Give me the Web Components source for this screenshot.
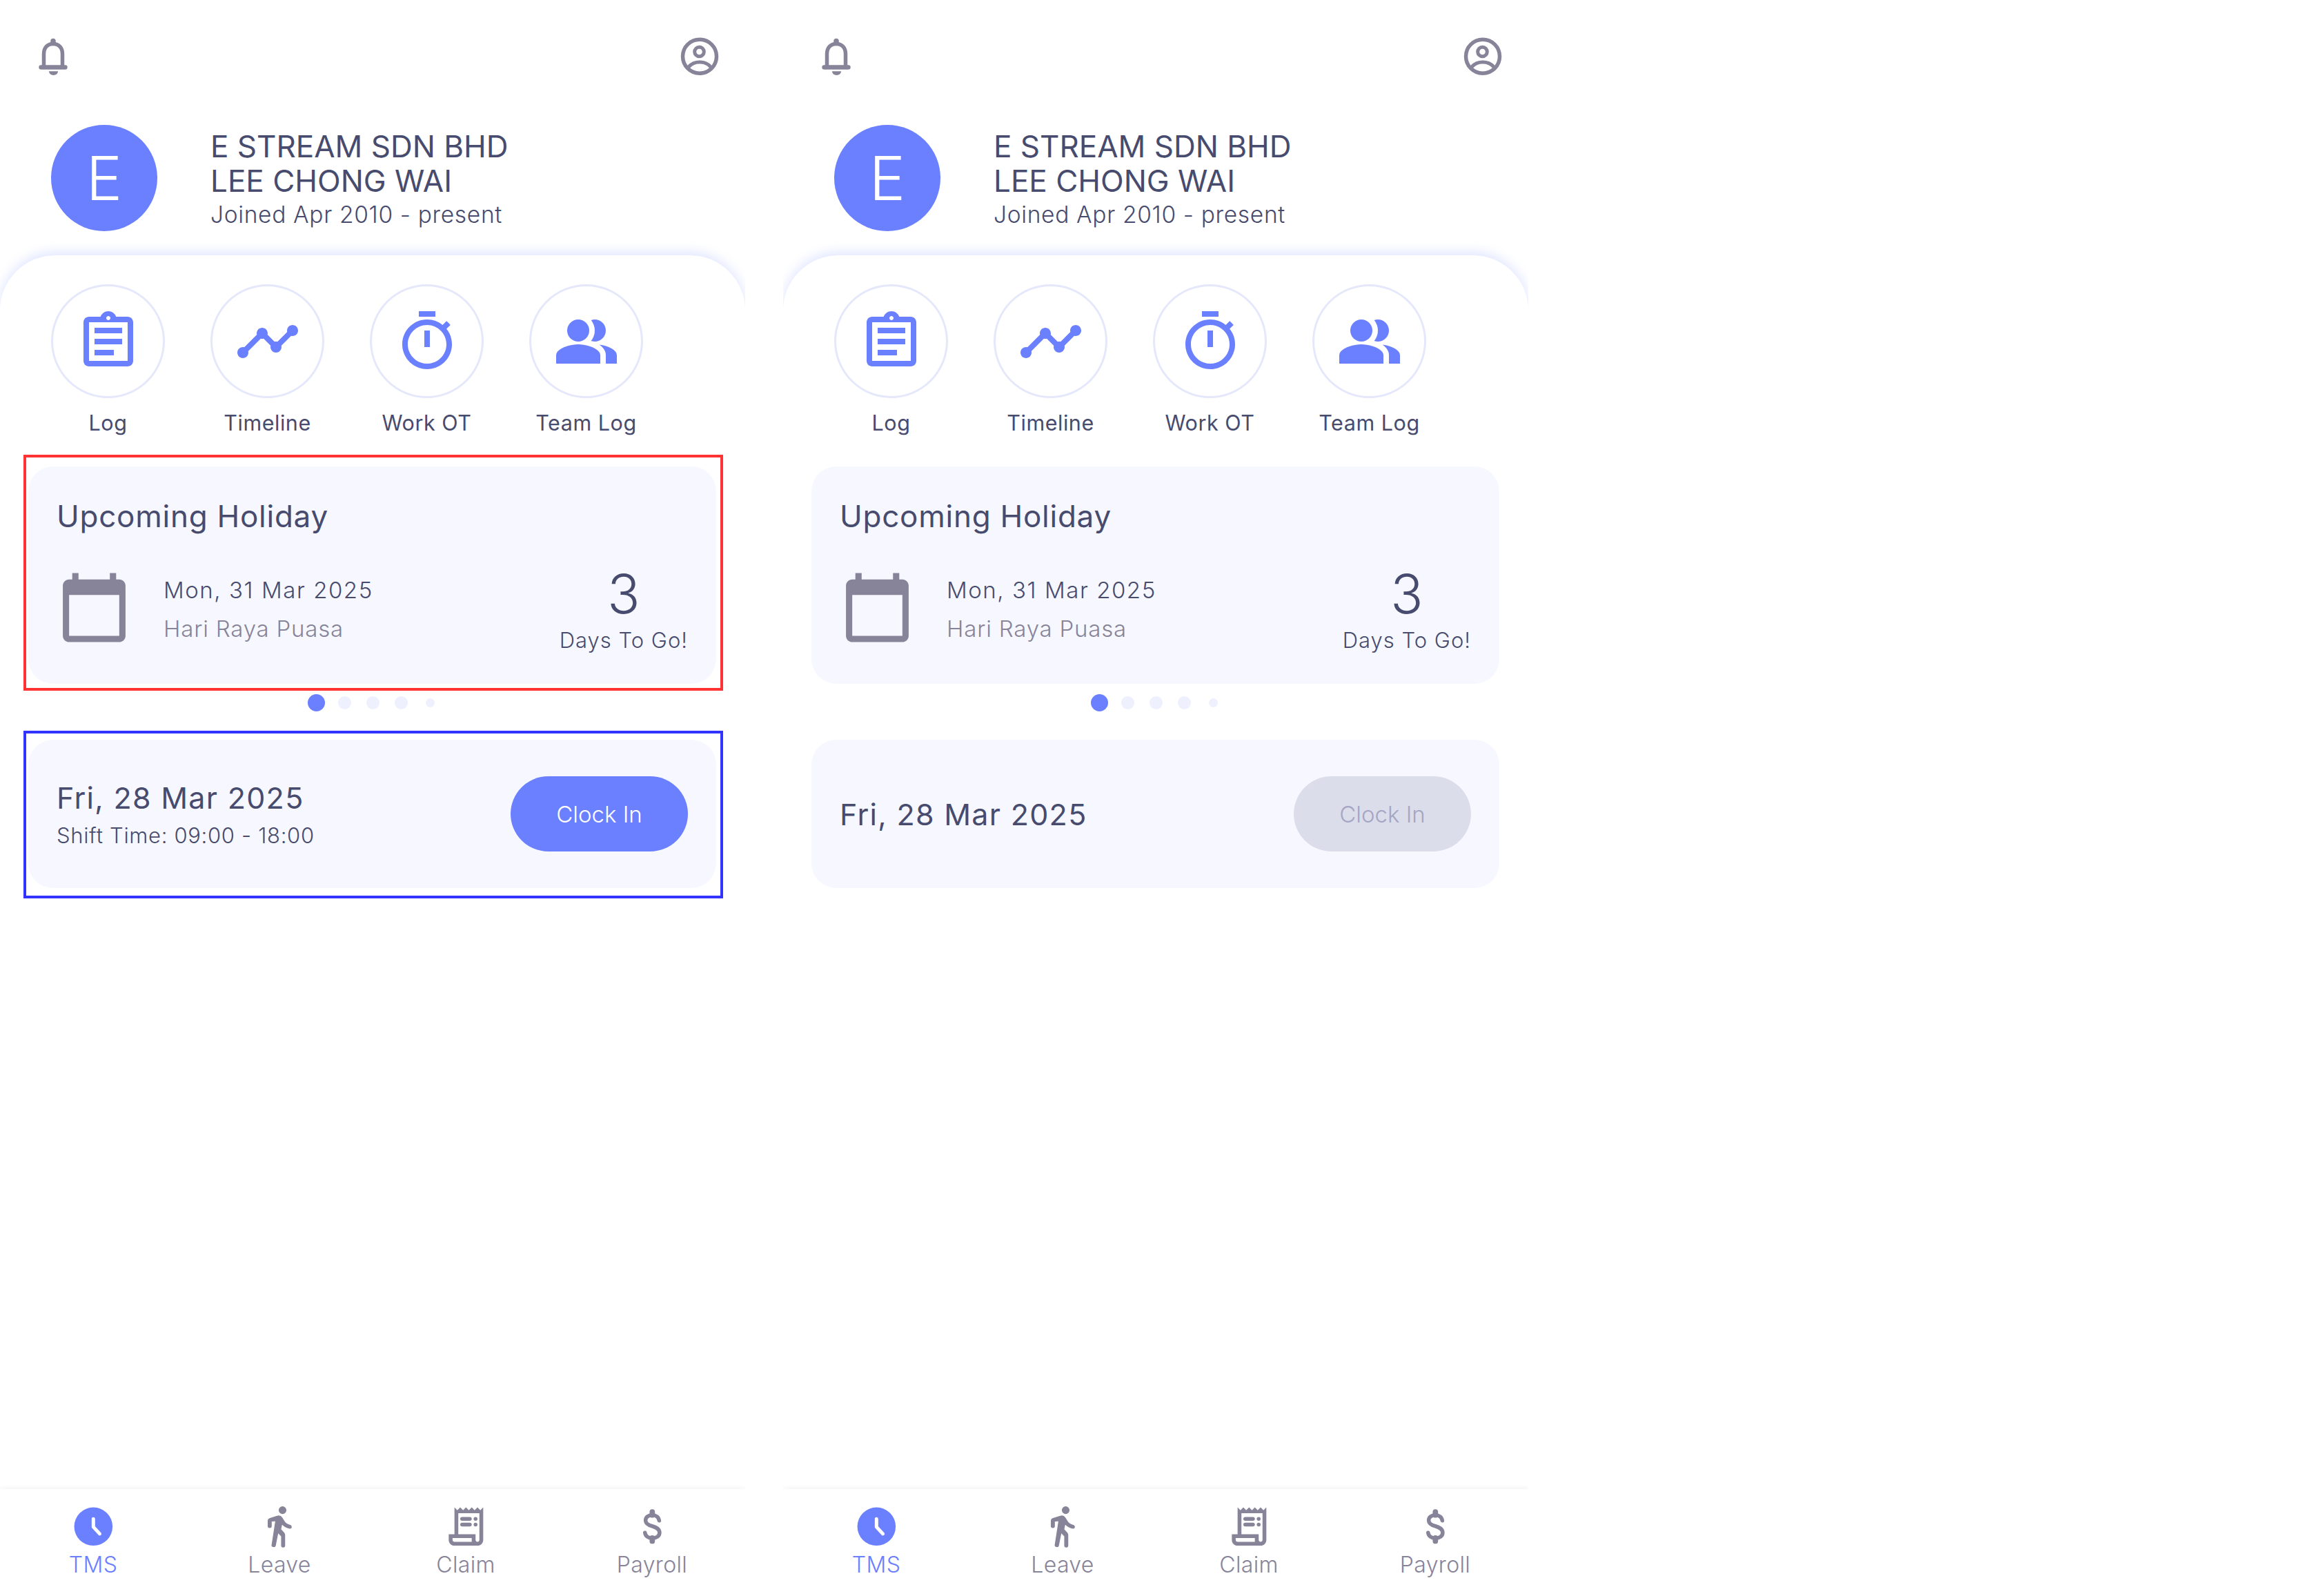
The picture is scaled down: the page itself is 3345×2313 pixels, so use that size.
<!DOCTYPE html>
<html>
<head>
<meta charset="utf-8">
<title>TMS</title>
<style>
  html, body { margin: 0; background: #fff; }
  body { font-family: Inter, "Noto Sans", sans-serif; color: #474b6e; }
  .screens { display: flex; gap: 55px; width: 3345px; height: 2313px; overflow: hidden; }
</style>
</head>
<body>
<div class="screens">
  <tms-screen annotated shift="09:00 - 18:00"></tms-screen>
  <tms-screen></tms-screen>
</div>
<script>
const ICONS = {
  log: '<path fill-rule="evenodd" d="M7 15h7v2H7zm0-4h10v2H7zm0-4h10v2H7zM19 3h-4.18C14.4 1.84 13.3 1 12 1s-2.4.84-2.82 2H5c-1.1 0-2 .9-2 2v14c0 1.1.9 2 2 2h14c1.1 0 2-.9 2-2V5c0-1.1-.9-2-2-2zm-7-.25c.41 0 .75.34.75.75s-.34.75-.75.75-.75-.34-.75-.75.34-.75.75-.75zM19 19H5V5h14v14z"/>',
  timeline: '<path d="M23 8c0 1.1-.9 2-2 2-.18 0-.35-.02-.51-.07l-3.56 3.55c.05.16.07.34.07.52 0 1.1-.9 2-2 2s-2-.9-2-2c0-.18.02-.36.07-.52l-2.55-2.55c-.16.05-.34.07-.52.07s-.36-.02-.52-.07l-4.55 4.56c.05.16.07.33.07.51 0 1.1-.9 2-2 2s-2-.9-2-2 .9-2 2-2c.18 0 .35.02.51.07l4.56-4.55C8.02 9.36 8 9.18 8 9c0-1.1.9-2 2-2s2 .9 2 2c0 .18-.02.36-.07.52l2.55 2.55c.16-.05.34-.07.52-.07s.36.02.52.07l3.55-3.56C19.02 8.35 19 8.18 19 8c0-1.1.9-2 2-2s2 .9 2 2z"/>',
  timer: '<path d="M15 1H9v2h6V1zm-4 13h2V8h-2v6zm8.03-6.61l1.42-1.42c-.43-.51-.9-.99-1.41-1.41l-1.42 1.42C16.07 4.74 14.12 4 12 4c-4.97 0-9 4.03-9 9s4.02 9 9 9 9-4.03 9-9c0-2.12-.74-4.07-1.97-5.61zM12 20c-3.87 0-7-3.13-7-7s3.13-7 7-7 7 3.13 7 7-3.13 7-7 7z"/>',
  team: '<path d="M16.67 13.13C18.04 14.06 19 15.32 19 17v3h4v-3c0-2.18-3.57-3.47-6.33-3.87z"/><circle cx="9" cy="8" r="4"/><path d="M15 12c2.21 0 4-1.79 4-4s-1.79-4-4-4c-.47 0-.91.1-1.33.24C14.5 5.27 15 6.58 15 8s-.5 2.73-1.33 3.76c.42.14.86.24 1.33.24z"/><path d="M9 13c-2.67 0-8 1.34-8 4v3h16v-3c0-2.66-5.33-4-8-4z"/>',
  calendar: '<path fill-rule="evenodd" d="M20 3h-1V1h-2v2H7V1H5v2H4c-1.1 0-2 .9-2 2v16c0 1.1.9 2 2 2h16c1.1 0 2-.9 2-2V5c0-1.1-.9-2-2-2zm0 18H4V8h16v13z"/>',
  clock: '<circle cx="12" cy="12" r="10"/><path d="M12 8v4.2l3.3 3.6" fill="none" stroke="#fff" stroke-width="1.8" stroke-linecap="round" stroke-linejoin="round"/>',
  walk: '<path stroke="currentColor" stroke-width=".5" stroke-linejoin="round" d="M13.5 5.2c.95 0 1.75-.8 1.75-1.75s-.8-1.75-1.75-1.75-1.75.8-1.75 1.75.8 1.75 1.75 1.75zM10 8.9L8 21.8c-.1.7 1.5 1 1.7.2l1.4-7 1.9 2v5c0 .9 1.6.9 1.6 0v-5.5c0-.4-.1-.7-.3-1l-1.8-2 .6-3c.9 1.1 2.6 2.1 4.2 2.4.9.1 1-1.3.2-1.5-1.5-.4-2.7-1.2-3.3-2.3l-1-1.6c-.4-.6-1-1-1.7-1-.3 0-.5.1-.8.1L7 7.8c-.6.2-1 .7-1 1.3v2.7c0 1 1.6 1 1.6 0V9.2l2.4-.3z"/>',
  receipt: '<path d="M19.5 3.5 18 2l-1.5 1.5L15 2l-1.5 1.5L12 2l-1.5 1.5L9 2 7.5 3.5 6 2v14H3v3c0 1.66 1.34 3 3 3h12c1.66 0 3-1.34 3-3V2l-1.5 1.5zM15 20H6c-.55 0-1-.45-1-1v-1h10v2zm4-1c0 .55-.45 1-1 1s-1-.45-1-1v-3H8V5h11v14z"/><rect x="9" y="7" width="6" height="2" rx="1"/><circle cx="17" cy="8" r="1"/><rect x="9" y="10" width="6" height="2" rx="1"/><circle cx="17" cy="11" r="1"/>',
  dollar: '<path fill="none" stroke="currentColor" stroke-width="2" stroke-linecap="round" d="M15.6 8.9C15.4 7.1 14 6 11.9 6 9.9 6 8.5 7.2 8.5 8.8c0 1.8 1.7 2.5 3.5 3 2 .6 3.8 1.3 3.8 3.4 0 1.8-1.6 2.8-3.8 2.8-2.1 0-3.6-1-3.8-2.8"/><path fill="none" stroke="currentColor" stroke-width="2.8" stroke-linecap="round" d="M12 4.4V6M12 18v1.6"/>'
};

class TopBar extends HTMLElement {
  connectedCallback() {
    const root = this.shadowRoot || this.attachShadow({ mode: 'open' });
    root.innerHTML = `
      <style>
        :host { display: flex; justify-content: space-between; padding: 30px 20px 0 30px; height: 100px; color: #878499; }
        svg { width: 100px; height: 100px; display: block; }
      </style>
      <svg viewBox="0 0 100 100" fill="none" stroke="currentColor">
        <path stroke-width="5.5" d="M33.5 66V48c0-9 5.5-14.500 13.500-14.500S60.500 39 60.500 48v18"/>
        <path stroke-width="6.400" stroke-linecap="round" d="M29.500 67.500h35"/>
        <path stroke-width="7.500" stroke-linecap="round" d="M47 29.500v3"/>
        <path fill="currentColor" stroke="none" d="M41 73.300h13c0 3.500-3 5.700-6.500 5.700S41 76.800 41 73.300z"/>
      </svg>
      <svg viewBox="0 0 100 100" fill="none" stroke="currentColor" stroke-width="5">
        <circle cx="54" cy="51.700" r="24.500" stroke-width="5.500"/>
        <circle cx="53.500" cy="45" r="6.800"/>
        <path stroke-linecap="round" d="M38.500 66.500c4.500-5 11.500-6.500 15.500-6.500s11 1.500 15.500 6.500"/>
      </svg>
    `;
  }
}

class ProfileHead extends HTMLElement {
  connectedCallback() {
    const root = this.shadowRoot || this.attachShadow({ mode: 'open' });
    root.innerHTML = `
      <style>
        :host { display: flex; align-items: flex-start; gap: 77px; margin-top: 51px; padding-left: 74px; height: 154px; }
        .avatar { width: 154px; height: 154px; border-radius: 50%; background: #6b80ff; color: #fff; display: flex; align-items: center; justify-content: center; font-size: 88px; font-weight: 300; line-height: 1; }
        .text { padding-top: 6px; }
        .name { font-size: 44px; line-height: 50px; color: #474b6e; }
        .since { font-size: 33.500px; line-height: 48px; letter-spacing: .67px; color: #474b6e; font-weight: 350; }
      </style>
      <div class="avatar">E</div>
      <div class="text">
        <div class="name">E STREAM SDN BHD</div>
        <div class="name">LEE CHONG WAI</div>
        <div class="since">Joined Apr 2010 - present</div>
      </div>
    `;
  }
}

class QuickAction extends HTMLElement {
  connectedCallback() {
    const root = this.shadowRoot || this.attachShadow({ mode: 'open' });
    root.innerHTML = `
      <style>
        :host { display: block; width: 165px; text-align: center; }
        .ring { width: 165px; height: 165px; box-sizing: border-box; border: 3px solid #e5e8fb; border-radius: 50%; display: flex; align-items: center; justify-content: center; }
        svg { width: 96px; height: 96px; fill: #6b80ff; display: block; }
        .label { font-size: 30.500px; line-height: 40px; margin-top: 16px; letter-spacing: .55px; color: #474b6e; white-space: nowrap; }
      </style>
      <div class="ring"><svg viewBox="0 0 24 24">${ICONS[this.getAttribute('icon')]}</svg></div>
      <div class="label"><slot></slot></div>
    `;
  }
}

class PagerDots extends HTMLElement {
  connectedCallback() {
    const root = this.shadowRoot || this.attachShadow({ mode: 'open' });
    root.innerHTML = `
      <style>
        :host { display: flex; align-items: center; justify-content: center; gap: 22px; height: 55px; margin-bottom: 26px; padding-right: 5px; }
        i { width: 19px; height: 19px; border-radius: 50%; background: #eef0fd; display: block; }
        i.on { width: 25px; height: 25px; background: #6b80ff; margin-right: -3px; }
        i.end { width: 13px; height: 13px; margin-left: 4px; }
      </style>
      <i class="on"></i><i></i><i></i><i></i><i class="end"></i>
    `;
  }
}

class HolidayCard extends HTMLElement {
  connectedCallback() {
    const root = this.shadowRoot || this.attachShadow({ mode: 'open' });
    root.innerHTML = `
      <style>
        :host { display: block; position: relative; box-sizing: border-box; height: 315px; margin: 0 42px 0 41px; padding: 47px 41px 0 41px; background: #f7f8ff; border-radius: 36px; }
        h2 { margin: 0; font-size: 44px; line-height: 50px; font-weight: 400; letter-spacing: .75px; color: #474b6e; }
        .row { display: flex; align-items: flex-start; margin-top: 53px; }
        svg { width: 109px; height: 109px; fill: #878499; flex: none; }
        .info { margin: 1px 0 0 46px; flex: 1; }
        .date { font-size: 33px; line-height: 56px; letter-spacing: 1.550px; color: #474b6e; font-weight: 350; }
        .name { font-size: 33px; line-height: 56px; letter-spacing: .8px; color: #878499; font-weight: 350; }
        .count { margin-top: -10px; text-align: center; }
        .num { font-size: 78px; line-height: 90px; font-weight: 300; color: #474b6e; }
        .cap { font-size: 31px; line-height: 44px; letter-spacing: 1px; color: #474b6e; white-space: nowrap; font-weight: 350; }
      </style>
      <h2>Upcoming Holiday</h2>
      <div class="row">
        <svg viewBox="0 0 24 24">${ICONS.calendar}</svg>
        <div class="info">
          <div class="date">Mon, 31 Mar 2025</div>
          <div class="name">Hari Raya Puasa</div>
        </div>
        <div class="count">
          <div class="num">3</div>
          <div class="cap">Days To Go!</div>
        </div>
      </div>
      <slot></slot>
    `;
  }
}

class ClockButton extends HTMLElement {
  connectedCallback() {
    const root = this.shadowRoot || this.attachShadow({ mode: 'open' });
    const off = this.hasAttribute('disabled');
    root.innerHTML = `
      <style>
        :host { display: flex; align-items: center; justify-content: center; width: 257px; height: 109px; border-radius: 55px; background: ${off ? '#dcddeb' : '#6b80ff'}; color: ${off ? '#a5a5c4' : '#fff'}; font-size: 33px; font-weight: 350; flex: none; }
      </style>
      <slot></slot>
    `;
  }
}

class ShiftCard extends HTMLElement {
  connectedCallback() {
    const root = this.shadowRoot || this.attachShadow({ mode: 'open' });
    const shift = this.getAttribute('shift');
    root.innerHTML = `
      <style>
        :host { display: flex; align-items: center; justify-content: space-between; position: relative; box-sizing: border-box; height: 215px; margin: 0 42px 0 41px; padding: 0 41px 0 41px; background: #f7f8ff; border-radius: 36px; }
        .text.has-shift { padding-top: 5px; }
        .date { font-size: 43px; line-height: 50px; letter-spacing: 1.300px; color: #474b6e; }
        .shift { font-size: 31px; line-height: 44px; margin-top: 8px; letter-spacing: .67px; color: #474b6e; font-weight: 350; }
      </style>
      <div class="text ${shift ? 'has-shift' : ''}">
        <div class="date">Fri, 28 Mar 2025</div>
        ${shift ? `<div class="shift">Shift Time: ${shift}</div>` : ''}
      </div>
      <clock-button ${shift ? '' : 'disabled'}>Clock In</clock-button>
      <slot></slot>
    `;
  }
}

class MarkBox extends HTMLElement {
  connectedCallback() {
    const root = this.shadowRoot || this.attachShadow({ mode: 'open' });
    root.innerHTML = `
      <style>
        :host { position: absolute; display: block; box-sizing: border-box; border: 4px solid var(--mark); pointer-events: none; }
      </style>
    `;
  }
}

class NavItem extends HTMLElement {
  connectedCallback() {
    const root = this.shadowRoot || this.attachShadow({ mode: 'open' });
    const on = this.hasAttribute('active');
    root.innerHTML = `
      <style>
        :host { display: block; flex: 1; text-align: center; color: ${on ? '#6b80ff' : '#878499'}; }
        svg { width: 66.670px; height: 66.670px; fill: currentColor; display: block; margin: 0 auto; }
        .label { font-size: 32px; line-height: 40px; margin-top: 2px; letter-spacing: .35px; font-weight: 350; }
      </style>
      <svg viewBox="0 0 24 24">${ICONS[this.getAttribute('icon')]}</svg>
      <div class="label"><slot></slot></div>
    `;
  }
}

class BottomNav extends HTMLElement {
  connectedCallback() {
    const root = this.shadowRoot || this.attachShadow({ mode: 'open' });
    root.innerHTML = `
      <style>
        :host { display: flex; box-sizing: border-box; height: 155px; padding-top: 21px; margin-top: auto; background: #fff; box-shadow: 0 -2px 5px rgba(40, 40, 60, .05); position: relative; }
      </style>
      <slot></slot>
    `;
  }
}

class TmsScreen extends HTMLElement {
  connectedCallback() {
    const root = this.shadowRoot || this.attachShadow({ mode: 'open' });
    const annotated = this.hasAttribute('annotated');
    const shift = this.getAttribute('shift');
    root.innerHTML = `
      <style>
        :host { display: flex; flex-direction: column; width: 1080px; height: 2313px; flex: none; overflow: hidden; background: #fff; }
        .panel { flex: 1; display: flex; flex-direction: column; margin-top: 35px; border-radius: 80px 80px 0 0; background: #fff; box-shadow: 0 -5px 16px rgba(107, 128, 255, .2); }
        .actions { display: flex; gap: 66px; padding: 42px 0 0 74px; height: 264px; }
        .red { --mark: #ff3333; inset: -17px -10px -10px -7px; }
        .blue { --mark: #3333ff; inset: -13px -10px -15px -7px; }
      </style>
      <top-bar></top-bar>
      <profile-head></profile-head>
      <div class="panel">
        <div class="actions">
          <quick-action icon="log">Log</quick-action>
          <quick-action icon="timeline">Timeline</quick-action>
          <quick-action icon="timer">Work OT</quick-action>
          <quick-action icon="team">Team Log</quick-action>
        </div>
        <holiday-card>${annotated ? '<mark-box class="red"></mark-box>' : ''}</holiday-card>
        <pager-dots></pager-dots>
        <shift-card ${shift ? `shift="${shift}"` : ''}>${annotated ? '<mark-box class="blue"></mark-box>' : ''}</shift-card>
        <bottom-nav>
          <nav-item icon="clock" active>TMS</nav-item>
          <nav-item icon="walk">Leave</nav-item>
          <nav-item icon="receipt">Claim</nav-item>
          <nav-item icon="dollar">Payroll</nav-item>
        </bottom-nav>
      </div>
    `;
  }
}

customElements.define('top-bar', TopBar);
customElements.define('profile-head', ProfileHead);
customElements.define('quick-action', QuickAction);
customElements.define('pager-dots', PagerDots);
customElements.define('holiday-card', HolidayCard);
customElements.define('clock-button', ClockButton);
customElements.define('shift-card', ShiftCard);
customElements.define('mark-box', MarkBox);
customElements.define('nav-item', NavItem);
customElements.define('bottom-nav', BottomNav);
customElements.define('tms-screen', TmsScreen);
</script>
</body>
</html>
